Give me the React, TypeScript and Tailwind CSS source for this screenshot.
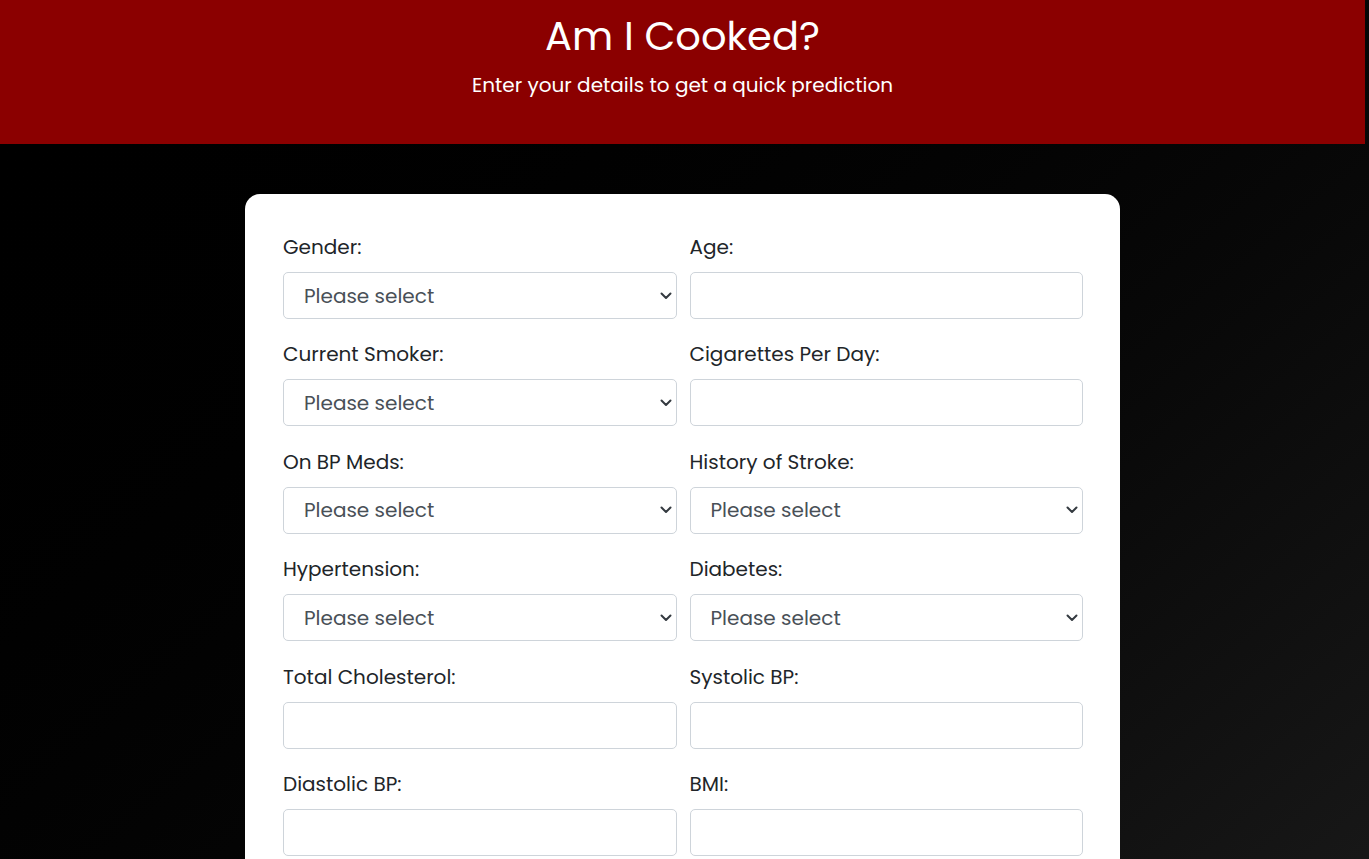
type Field = { label: string; type: "select" | "input" }

const fields: Field[] = [
  { label: "Gender:", type: "select" },
  { label: "Age:", type: "input" },
  { label: "Current Smoker:", type: "select" },
  { label: "Cigarettes Per Day:", type: "input" },
  { label: "On BP Meds:", type: "select" },
  { label: "History of Stroke:", type: "select" },
  { label: "Hypertension:", type: "select" },
  { label: "Diabetes:", type: "select" },
  { label: "Total Cholesterol:", type: "input" },
  { label: "Systolic BP:", type: "input" },
  { label: "Diastolic BP:", type: "input" },
  { label: "BMI:", type: "input" },
  { label: "Heart Rate:", type: "input" },
  { label: "Glucose:", type: "input" },
]

function FormField({ field }: { field: Field }) {
  return (
    <div className="flex flex-col">
      <label className="text-[20px] leading-[30px] text-[#212529] mb-[10px]">{field.label}</label>
      {field.type === "select" ? (
        <div className="relative">
          <select className="w-full h-[47px] appearance-none rounded-[5px] border border-[#ced4da] bg-white pl-[20px] pr-10 text-[20px] text-[#495057] outline-none">
            <option>Please select</option>
            <option>Yes</option>
            <option>No</option>
          </select>
          {/* chevron */}
          <svg
            className="absolute right-[5px] top-1/2 -translate-y-1/2 pointer-events-none"
            width="12"
            height="8"
            viewBox="0 0 12 8"
            fill="none"
          >
            <path d="M1.5 1.5l4.5 4.5 4.5-4.5" stroke="#343a40" strokeWidth="2" strokeLinecap="round" strokeLinejoin="round" />
          </svg>
        </div>
      ) : (
        <input
          type="number"
          className="w-full h-[47px] rounded-[5px] border border-[#ced4da] bg-white px-[20px] text-[20px] text-[#495057] outline-none"
        />
      )}
    </div>
  )
}

export default function App() {
  return (
    <div className="min-h-screen pr-[4px] bg-gradient-to-br from-black to-[#1e1e1e] font-['Poppins','Inter',sans-serif]">
      <header className="h-[144px] bg-[#8b0000] flex flex-col items-center pt-[10px] text-white">
        <h1 className="text-[40px] leading-[52px] font-normal">Am I Cooked?</h1>
        <p className="mt-[8px] text-[20px] leading-[30px]">Enter your details to get a quick prediction</p>
      </header>

      <main className="flex justify-center pt-[50px] pb-16">
        <div className="w-[875px] bg-white rounded-[15px] pl-[38px] pr-[37px] pt-[38px] pb-10">
          <div className="grid grid-cols-2 gap-x-[13px] gap-y-[20.4px]">
            {fields.map((f) => (
              <FormField key={f.label} field={f} />
            ))}
          </div>
          <button className="mt-8 w-full h-[50px] rounded-[5px] bg-[#8b0000] text-white text-[20px]">
            Predict
          </button>
        </div>
      </main>
    </div>
  )
}
